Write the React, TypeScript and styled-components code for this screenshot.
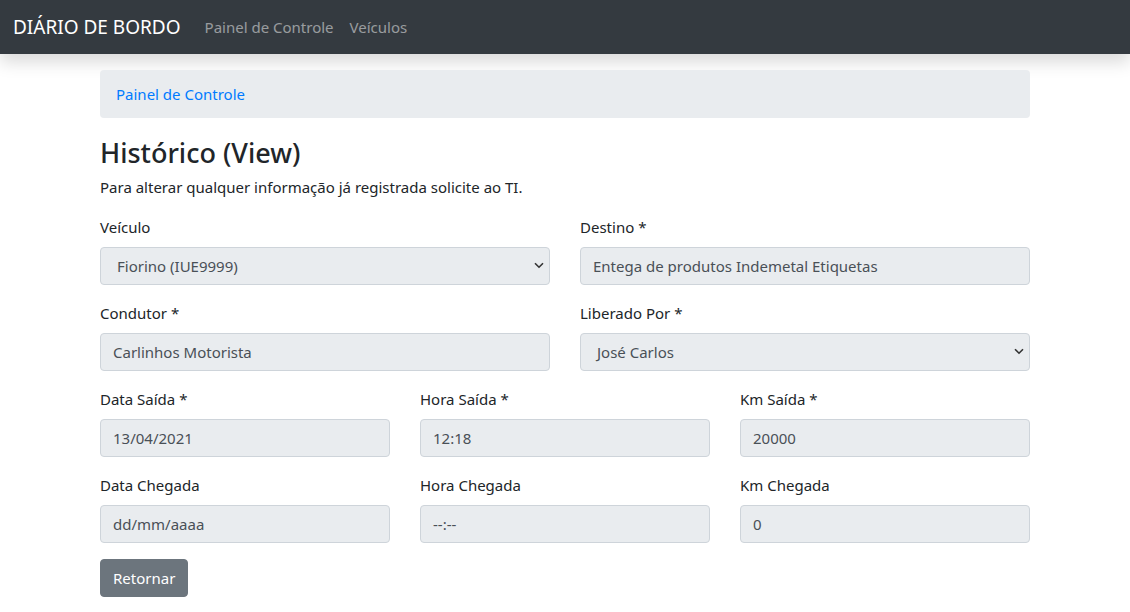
import React from "react";
import styled, { createGlobalStyle } from "styled-components";

const FONT = `"Noto Sans", "Open Sans", Roboto, sans-serif`;

const Global = createGlobalStyle`
  html, body { margin: 0; padding: 0; background: #fff; }
  body {
    font-family: ${FONT};
    font-size: 15px;
    line-height: 24px;
    color: #212529;
  }
  * { box-sizing: border-box; }
`;

const Navbar = styled.nav`
  height: 54px;
  background: #343a40;
  display: flex;
  align-items: center;
  padding: 0 13px;
  box-shadow: 0 8px 16px rgba(0, 0, 0, 0.15);
`;

const Brand = styled.a`
  color: #fff;
  font-size: 19px;
  line-height: 30px;
  margin-right: 16px;
  text-decoration: none;
`;

const NavLinks = styled.div`
  display: flex;
`;

const NavLink = styled.a`
  color: rgba(255, 255, 255, 0.5);
  padding: 0 8px;
  font-size: 15px;
  text-decoration: none;
`;

const Container = styled.main`
  width: 930px;
  margin: 16px auto 0;
`;

const Breadcrumb = styled.div`
  background: #e9ecef;
  border-radius: 4px;
  padding: 12px 16px;
  margin-bottom: 16px;
`;

const CrumbLink = styled.a`
  color: #007bff;
  text-decoration: none;
`;

const Title = styled.h3`
  margin: 0 0 8px;
  font-size: 27px;
  font-weight: 500;
  line-height: 33px;
  padding-top: 2px;
  height: 33px;
`;

const Lead = styled.p`
  margin: 0 0 16px;
`;

const Row = styled.div<{ $cols: number }>`
  display: grid;
  grid-template-columns: repeat(${(p) => p.$cols}, 1fr);
  column-gap: 30px;
`;

const Group = styled.div`
  margin-bottom: 16px;
`;

const Label = styled.label`
  display: block;
  margin-bottom: 8px;
`;

const Field = styled.input`
  display: block;
  width: 100%;
  height: 38px;
  padding: 6px 12px;
  font-family: ${FONT};
  font-size: 15px;
  line-height: 24px;
  color: #495057;
  background: #e9ecef;
  border: 1px solid #ced4da;
  border-radius: 4px;
  outline: none;
`;

const SelectWrap = styled.div`
  position: relative;
`;

const SelectBox = styled.div`
  height: 38px;
  padding: 6px 12px 6px 16px;
  color: #495057;
  background: #e9ecef;
  border: 1px solid #ced4da;
  border-radius: 4px;
`;

const Chevron = styled.svg`
  position: absolute;
  right: 6px;
  top: 15px;
`;

const Button = styled.button`
  font-family: ${FONT};
  font-size: 15px;
  line-height: 24px;
  color: #fff;
  background: #6c757d;
  border: 1px solid #6c757d;
  border-radius: 4px;
  padding: 6px 12px;
  height: 38px;
  cursor: pointer;
`;

function Select({ value }: { value: string }) {
  return (
    <SelectWrap>
      <SelectBox>{value}</SelectBox>
      <Chevron width="10" height="7" viewBox="0 0 10 7">
        <path d="M1 1.2 L5 5.2 L9 1.2" fill="none" stroke="#333" strokeWidth="1.6" />
      </Chevron>
    </SelectWrap>
  );
}

function Input({ label, value }: { label: string; value: string }) {
  return (
    <Group>
      <Label>{label}</Label>
      <Field readOnly value={value} />
    </Group>
  );
}

export default function App() {
  return (
    <>
      <Global />
      <Navbar>
        <Brand>DIÁRIO DE BORDO</Brand>
        <NavLinks>
          <NavLink>Painel de Controle</NavLink>
          <NavLink>Veículos</NavLink>
        </NavLinks>
      </Navbar>
      <Container>
        <Breadcrumb>
          <CrumbLink>Painel de Controle</CrumbLink>
        </Breadcrumb>
        <Title>Histórico (View)</Title>
        <Lead>Para alterar qualquer informação já registrada solicite ao TI.</Lead>
        <Row $cols={2}>
          <Group>
            <Label>Veículo</Label>
            <Select value="Fiorino (IUE9999)" />
          </Group>
          <Input label="Destino *" value="Entega de produtos Indemetal Etiquetas" />
          <Input label="Condutor *" value="Carlinhos Motorista" />
          <Group>
            <Label>Liberado Por *</Label>
            <Select value="José Carlos" />
          </Group>
        </Row>
        <Row $cols={3}>
          <Input label="Data Saída *" value="13/04/2021" />
          <Input label="Hora Saída *" value="12:18" />
          <Input label="Km Saída *" value="20000" />
          <Input label="Data Chegada" value="dd/mm/aaaa" />
          <Input label="Hora Chegada" value="--:--" />
          <Input label="Km Chegada" value="0" />
        </Row>
        <Button>Retornar</Button>
      </Container>
    </>
  );
}
